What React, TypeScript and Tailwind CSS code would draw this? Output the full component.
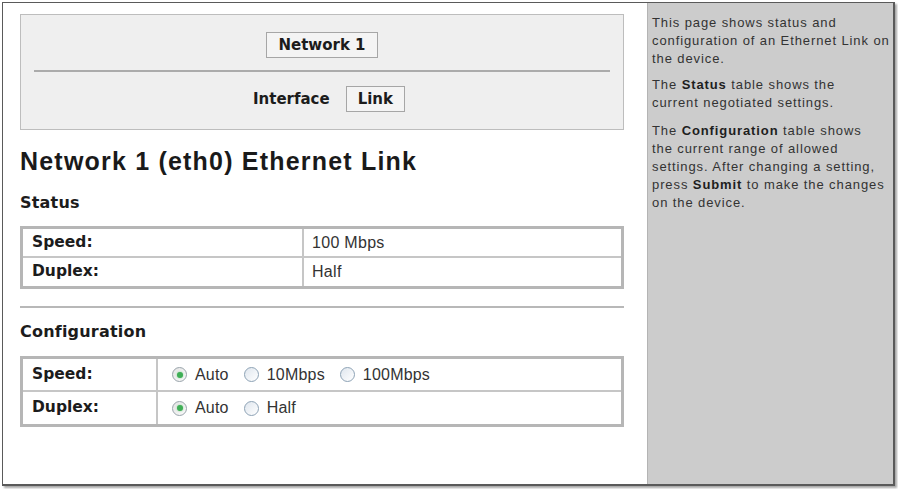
import React from 'react';

const labelFont = "font-['DejaVu_Sans',Verdana,sans-serif] font-bold text-[#1c1c1c]";
const textFont = "font-['Liberation_Sans',Arial,sans-serif] text-[#333]";

const Radio: React.FC<{ checked?: boolean }> = ({ checked }) => (
  <span
    className={`flex h-[15px] w-[15px] shrink-0 items-center justify-center rounded-full border ${
      checked
        ? 'border-[#98a3aa] bg-gradient-to-br from-[#e4e4e4] to-[#fafafa]'
        : 'border-[#8da2b5] bg-gradient-to-br from-[#dfe6ee] to-[#ffffff]'
    }`}
  >
    {checked && <span className="h-[6px] w-[6px] rounded-full bg-[#3fae56] shadow-[0_0_2px_#7fd08f]" />}
  </span>
);

const Option: React.FC<{ label: string; checked?: boolean }> = ({ label, checked }) => (
  <span className="flex items-center">
    <Radio checked={checked} />
    <span className={`ml-[8px] text-[16px] tracking-[0.2px] ${textFont}`}>{label}</span>
  </span>
);

const NavButton: React.FC<{ children: React.ReactNode }> = ({ children }) => (
  <span
    className={`flex h-[26px] items-center border border-[#a6a6a6] bg-[#f4f4f4] px-[11px] text-[15px] ${labelFont}`}
  >
    {children}
  </span>
);

export default function App() {
  return (
    <div className="h-[489px] w-[898px] overflow-hidden bg-white pl-[2px] pt-[2px]">
      <div className="flex h-[484px] w-[893px] border-l border-t border-r-2 border-b-2 border-[#5a5a5a] shadow-[2px_2px_2px_rgba(0,0,0,0.35)]">
        {/* Main column */}
        <div className="w-[644px] shrink-0 pl-[17px] pr-[23px] pt-[11px]">
          {/* Navigation box */}
          <div className="flex h-[116px] flex-col items-center border border-[#bdbdbd] bg-[#efefef] px-[13px] pt-[17px]">
            <NavButton>Network 1</NavButton>
            <div className="mt-[12px] h-[2px] w-full bg-[#ababab]" />
            <div className="mt-[14px] flex items-center gap-[16px] pl-[14px]">
              <span className={`text-[15px] ${labelFont}`}>Interface</span>
              <NavButton>Link</NavButton>
            </div>
          </div>

          <h1 className="mt-[16px] font-['Liberation_Sans',Arial,sans-serif] text-[25px] font-bold leading-[30px] tracking-[1.2px] text-[#1a1a1a]">
            Network 1 (eth0) Ethernet Link
          </h1>

          <h2 className={`mt-[17px] text-[16px] leading-[20px] tracking-[0.2px] ${labelFont}`}>Status</h2>

          <div className="mt-[13px] border-[3px] border-[#b6b6b6]">
            <div className="flex h-[27px]">
              <div className={`flex w-[281px] items-center border-r-2 border-[#c6c6c6] pl-[9px] text-[15.5px] ${labelFont}`}>
                Speed:
              </div>
              <div className={`flex flex-1 items-center pl-[8px] text-[16px] tracking-[0.3px] ${textFont}`}>100 Mbps</div>
            </div>
            <div className="flex h-[30px] border-t-2 border-[#c6c6c6]">
              <div className={`flex w-[281px] items-center border-r-2 border-[#c6c6c6] pl-[9px] text-[15.5px] ${labelFont}`}>
                Duplex:
              </div>
              <div className={`flex flex-1 items-center pl-[8px] text-[16px] tracking-[0.3px] ${textFont}`}>Half</div>
            </div>
          </div>

          <div className="mt-[17px] h-[2px] w-full bg-[#b8b8b8]" />

          <h2 className={`mt-[14px] text-[16px] leading-[20px] tracking-[0.2px] ${labelFont}`}>Configuration</h2>

          <div className="mt-[14px] border-[3px] border-[#b6b6b6]">
            <div className="flex h-[31px]">
              <div className={`flex w-[135px] items-center border-r-2 border-[#c6c6c6] pl-[9px] text-[15.5px] ${labelFont}`}>
                Speed:
              </div>
              <div className="flex flex-1 items-center gap-[15px] pl-[14px]">
                <Option label="Auto" checked />
                <Option label="10Mbps" />
                <Option label="100Mbps" />
              </div>
            </div>
            <div className="flex h-[34px] border-t-2 border-[#c6c6c6]">
              <div className={`flex w-[135px] items-center border-r-2 border-[#c6c6c6] pl-[9px] text-[15.5px] ${labelFont}`}>
                Duplex:
              </div>
              <div className="flex flex-1 items-center gap-[15px] pl-[14px]">
                <Option label="Auto" checked />
                <Option label="Half" />
              </div>
            </div>
          </div>
        </div>

        {/* Help sidebar */}
        <div className="flex-1 border-l border-[#b4b4b4] bg-[#cccccc] pl-[4px] pt-[11px] font-['Liberation_Sans',Arial,sans-serif] text-[13px] leading-[18px] tracking-[0.9px] text-[#333]">
          <p className="mb-[8px] whitespace-nowrap">
            This page shows status and
            <br />
            configuration of an Ethernet Link on
            <br />
            the device.
          </p>
          <p className="mb-[10px] whitespace-nowrap">
            The <b className="text-[#1e1e1e]">Status</b> table shows the
            <br />
            current negotiated settings.
          </p>
          <p className="whitespace-nowrap">
            The <b className="text-[#1e1e1e]">Configuration</b> table shows
            <br />
            the current range of allowed
            <br />
            settings. After changing a setting,
            <br />
            press <b className="text-[#1e1e1e]">Submit</b> to make the changes
            <br />
            on the device.
          </p>
        </div>
      </div>
    </div>
  );
}
